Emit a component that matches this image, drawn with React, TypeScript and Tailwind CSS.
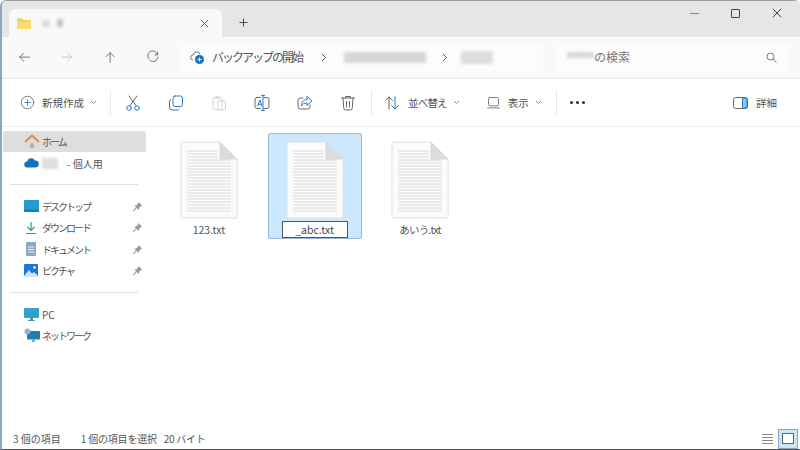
import { ReactNode } from "react";

const font = { fontFamily: '"Noto Sans CJK JP", "Noto Sans", sans-serif' };

function Blur({ className }: { className: string }) {
  return <div className={`blur-[1.5px] ${className}`} />;
}

function Chevron() {
  return (
    <svg width="7" height="5" viewBox="0 0 7 5" fill="none" stroke="#8a8a8a" strokeWidth="1">
      <path d="M1 1l2.5 2.5L6 1" />
    </svg>
  );
}

function Ico({ size = 18, children }: { size?: number; children: ReactNode }) {
  return (
    <svg width={size} height={size} viewBox="0 0 18 18" fill="none" strokeLinecap="round" strokeLinejoin="round" className="shrink-0">
      {children}
    </svg>
  );
}

function TxtFile() {
  const lines = Array.from({ length: 21 }, (_, i) => 10 + i * 3);
  return (
    <svg width="58" height="78" viewBox="0 0 58 78" className="shrink-0">
      <path d="M1 1h39l17 17v59H1z" fill="#fbfbfb" stroke="#e0e0e0" />
      <path d="M40 1l17 17H40z" fill="#dcdcdc" stroke="#d8d8d8" />
      {lines.map((y) => (
        <path key={y} d={`M7 ${y}h${y < 18 ? 31 : 44}`} stroke="#dadada" strokeWidth="1" />
      ))}
    </svg>
  );
}

function Pin() {
  return (
    <svg width="11" height="11" viewBox="0 0 10 10" className="ml-auto">
      <path d="M5.8.8l3.4 3.4-1.3.5-1.6 2-.3 1.6L2 4.4l1.6-.3 2-1.6z" fill="#999" />
      <path d="M3.6 6.4L1 9" stroke="#999" />
    </svg>
  );
}

function NavRow({ icon, label, pin, active }: { icon: ReactNode; label: ReactNode; pin?: boolean; active?: boolean }) {
  return (
    <div className={`flex items-center h-[21.4px] pl-[21px] pr-[3px] rounded-[2px] text-[10px] text-[#555] ${active ? "bg-[#dedede]" : ""}`}>
      <div className="w-[18px] flex shrink-0">{icon}</div>
      {label}
      {pin && <Pin />}
    </div>
  );
}

function Kana({ children }: { children: string }) {
  return <span className="tracking-[-2px]">{children}</span>;
}

function Sep() {
  return <div className="h-px bg-[#e0e0e0] ml-[7px] mr-[8px] my-[10.5px]" />;
}

function FileItem({ name, selected, narrow }: { name: string; selected?: boolean; narrow?: boolean }) {
  return (
    <div className={`w-[94px] h-[106px] flex flex-col items-center pt-[7px] rounded-[2px] border ${selected ? "bg-[#cce8ff] border-[#99b8d6]" : "border-transparent"}`}>
      <TxtFile />
      {selected ? (
        <div className="mt-[2px] w-[66px] h-[18px] bg-white border border-[#555] text-[10.5px] text-[#444] flex items-center justify-center">{name}</div>
      ) : (
        <div className={`mt-[4px] text-[10.5px] text-[#555] leading-[14px] ${narrow ? "tracking-[-0.8px]" : ""}`}>{name}</div>
      )}
    </div>
  );
}

export default function App() {
  return (
    <div style={font} className="w-[800px] h-[450px] overflow-hidden bg-white flex flex-col border-l-2 border-l-[#8da6c4] border-t border-t-[#9c9c9c] border-b border-b-[#555] rounded-tl-[6px] rounded-tr-[6px]">
      {/* Title bar */}
      <div className="h-[36px] bg-[#e6e6e6] flex items-end shrink-0">
        <div className="ml-[7px] w-[213px] h-[28px] bg-[#f9f9f9] rounded-t-[6px] flex items-center pl-[8px] pr-[13px]">
          <svg width="14" height="11" viewBox="0 0 14 11">
            <path d="M0 1.5A1 1 0 011 .5h4l1.5 1.5H13a1 1 0 011 1V10a1 1 0 01-1 1H1a1 1 0 01-1-1z" fill="#f5cb4a" />
            <path d="M0 3.6h14V10a1 1 0 01-1 1H1a1 1 0 01-1-1z" fill="#fbdc70" />
          </svg>
          <Blur className="ml-[11px] w-[8px] h-[7px] bg-[#dcdcdc]" />
          <Blur className="ml-[7px] w-[6px] h-[8px] bg-[#c4c4c4]" />
          <svg width="9" height="9" viewBox="0 0 9 9" stroke="#555" strokeWidth="0.9" className="ml-auto">
            <path d="M.8.8l7.4 7.4M8.2.8L.8 8.2" />
          </svg>
        </div>
        <svg width="9" height="9" viewBox="0 0 9 9" stroke="#444" strokeWidth="1" className="ml-[17px] mb-[10px]">
          <path d="M4.5.5v8M.5 4.5h8" />
        </svg>
        <div className="ml-auto flex items-center gap-[32px] self-start mt-[6px] mr-[18px] h-[12px]">
          <div className="w-[9px] h-px bg-[#888]" />
          <div className="w-[9px] h-[9px] border border-[#444] rounded-[1px]" />
          <svg width="10" height="10" viewBox="0 0 10 10" stroke="#444" strokeWidth="1">
            <path d="M.8.8l8.4 8.4M9.2.8L.8 9.2" />
          </svg>
        </div>
      </div>

      {/* Address bar */}
      <div className="h-[42px] bg-[#f9f9f9] border-b border-[#e5e5e5] flex items-center shrink-0 pl-[15px] text-[#444]">
        <div className="flex items-center gap-[27px]">
          <Ico size={16}><path d="M14 8H3M7.5 3.5L3 8l4.5 4.5" stroke="#666" /></Ico>
          <Ico size={16}><path d="M2 8h11M8.5 3.5L13 8l-4.5 4.5" stroke="#c4c4c4" /></Ico>
          <Ico size={16}><path d="M8 14V3M3.5 7.5L8 3l4.500 4.500" stroke="#666" /></Ico>
          <Ico size={16}><path d="M12.8 5.2A5.5 5.5 0 103.2 10M13 2.5v3H10M13.4 8a5.5 5.5 0 01-9 3.8" stroke="#666" /></Ico>
        </div>
        <div className="ml-[18px] w-[363px] h-[28px] bg-[#fcfcfc] flex items-center pl-[10px] text-[12px]">
          <svg width="15" height="14" viewBox="0 0 15 14" className="shrink-0">
            <path d="M3 9a2.5 2.5 0 01.2-5A3.5 3.5 0 0110 3.2" fill="none" stroke="#3e7fb5" strokeWidth="1" />
            <circle cx="9.5" cy="8.5" r="4.5" fill="#1f6fb5" />
            <path d="M9.5 6.5v4M7.5 8.5h4" stroke="#fff" />
          </svg>
          <span className="ml-[7px] w-[90px] -mt-[2px] whitespace-nowrap tracking-[-2px] text-[#555]">バックアップの開始</span>
          <svg width="6" height="9" viewBox="0 0 6 9" stroke="#555" fill="none" className="ml-[19px]"><path d="M1 1l3.5 3.5L1 8" /></svg>
          <Blur className="ml-[17px] w-[82px] h-[11px] bg-[#d6d6d6]" />
          <svg width="6" height="9" viewBox="0 0 6 9" stroke="#555" fill="none" className="ml-[16px]"><path d="M1 1l3.5 3.5L1 8" /></svg>
          <Blur className="ml-[13px] w-[32px] h-[13px] bg-[#dedede]" />
        </div>
        <div className="ml-[14px] w-[233px] h-[28px] bg-[#fcfcfc] flex items-center pl-[10px] text-[12px] text-[#777]">
          <Blur className="w-[27px] h-[6px] -mt-[5px] bg-[#d8d8d8]" />
          <span className="-mt-[2px]">の検索</span>
          <svg width="11" height="11" viewBox="0 0 11 11" fill="none" stroke="#777" className="ml-auto mr-[13px]">
            <circle cx="4.5" cy="4.5" r="3.5" /><path d="M7 7l3.5 3.5" />
          </svg>
        </div>
      </div>

      {/* Toolbar */}
      <div className="h-[48px] bg-white border-b border-[#eeeeee] flex items-center shrink-0 text-[10.5px] text-[#555]">
        <div className="flex items-center pl-[18px] w-[108px]">
          <Ico size={15}><circle cx="9" cy="9" r="7.5" stroke="#666" /><path d="M9 5.5v7M5.5 9h7" stroke="#2b7cc4" /></Ico>
          <span className="ml-[7px] mt-[1px]">新規作成</span>
          <span className="ml-[6px]"><Chevron /></span>
        </div>
        <div className="w-px h-[26px] bg-[#e8e8e8]" />
        <div className="flex items-center gap-[25px] pl-[13px] w-[260px]">
          <Ico><path d="M5 2l7 9.5M13 2L6 11.5" stroke="#666" /><circle cx="5" cy="14" r="2.3" stroke="#2b7cc4" /><circle cx="13" cy="14" r="2.3" stroke="#2b7cc4" /></Ico>
          <Ico><rect x="6" y="2" width="9.5" height="10.5" rx="2" stroke="#2b7cc4" /><path d="M3.5 5.5A2 2 0 002.5 7.2V13a3 3 0 003 3h5a2 2 0 001.7-1" stroke="#666" /></Ico>
          <Ico><rect x="3" y="3.5" width="9" height="12" rx="1.5" stroke="#d4d4d4" /><rect x="8" y="7" width="7.5" height="9" rx="1" stroke="#c6d9ea" /><rect x="5.5" y="2" width="4" height="3" fill="#ddd" /></Ico>
          <Ico><rect x="2" y="3.5" width="14" height="11" rx="2" stroke="#666" /><path d="M9 1.5v15" stroke="#fff" strokeWidth="3" /><path d="M10 1.5v15M8.5 1.5h3M8.5 16.5h3" stroke="#2b7cc4" /><path d="M4.5 12L7 6l2 6M5.3 10.3h3" stroke="#2b7cc4" /></Ico>
          <Ico><path d="M7 4H4.5A2.5 2.5 0 002 6.5v6A2.5 2.5 0 004.5 15h7a2.5 2.5 0 002.5-2.5V11" stroke="#666" /><path d="M11 2.5L16 7l-5 4.5V9c-3 0-4.500 1-5.500 3 0-4 2-6.500 5.500-6.500z" stroke="#2b7cc4" /></Ico>
          <Ico><path d="M2.500 4h13M6.500 4V2.500h5V4M4 4l.8 10.500A2 2 0 006.800 16h4.400a2 2 0 002-1.500L14 4M7.500 7.500v5.500M10.500 7.500v5.500" stroke="#666" /></Ico>
        </div>
        <div className="w-px h-[26px] bg-[#e8e8e8]" />
        <div className="flex items-center ml-[11px]">
          <Ico><path d="M6 15V3M2.500 6.500L6 3l3.500 3.500" stroke="#666" /><path d="M12 3v12M8.500 11.500L12 15l3.500-3.500" stroke="#2b7cc4" /></Ico>
          <span className="ml-[7px] mt-[1px] tracking-[-0.8px]">並べ替え</span>
          <span className="ml-[6px]"><Chevron /></span>
        </div>
        <div className="flex items-center ml-[26px]">
          <Ico size={15}><rect x="3" y="3" width="12" height="10" rx="1.500" stroke="#666" /><path d="M2 15.500h14" stroke="#666" /></Ico>
          <span className="ml-[7px] mt-[1px]">表示</span>
          <span className="ml-[6px]"><Chevron /></span>
        </div>
        <div className="w-px h-[26px] bg-[#e8e8e8] ml-[14px]" />
        <div className="flex gap-[3px] ml-[13px]">
          <div className="w-[3px] h-[3px] rounded-full bg-[#333]" />
          <div className="w-[3px] h-[3px] rounded-full bg-[#333]" />
          <div className="w-[3px] h-[3px] rounded-full bg-[#333]" />
        </div>
        <div className="ml-auto flex items-center mr-[23px]">
          <svg width="15" height="12" viewBox="0 0 15 12" fill="none">
            <rect x=".5" y=".5" width="14" height="11" rx="2" stroke="#666" />
            <path d="M9.500 1h3.500a1 1 0 011 1v8a1 1 0 01-1 1H9.500z" fill="#8cc4ee" stroke="#2b7cc4" />
          </svg>
          <span className="ml-[8px] mt-[1px]">詳細</span>
        </div>
      </div>

      {/* Body */}
      <div className="flex flex-1 min-h-0">
        <div className="w-[160px] shrink-0 pl-[1px] pr-[16px] pt-[4px]">
          <NavRow active label={<Kana>ホーム</Kana>} icon={
            <svg width="16" height="15" viewBox="0 0 16 15">
              <path d="M3 7.500V14h10V7.500L8 3z" fill="#d9d9d9" />
              <path d="M1 8l7-6.500L15 8" fill="none" stroke="#e8873a" strokeWidth="1.800" />
              <rect x="6.500" y="9.500" width="3" height="4.500" fill="#a8a8a8" />
            </svg>
          } />
          <NavRow label={
            <span className="flex items-center"><Blur className="w-[16px] h-[11px] bg-[#dddddd]" /><span className="ml-[9px]">- 個人用</span></span>
          } icon={
            <svg width="15" height="10" viewBox="0 0 15 10"><path d="M3.500 9.500a3 3 0 01-.4-6 4.200 4.200 0 017.800-1A3.300 3.300 0 0111.500 9.500z" fill="#1470c4" /></svg>
          } />
          <Sep />
          <NavRow pin label={<Kana>デスクトップ</Kana>} icon={
            <svg width="15" height="12" viewBox="0 0 15 12"><rect width="15" height="12" rx="1" fill="#1f9ed1" /><rect y="9.500" width="15" height="2.500" fill="#1a7fb0" /></svg>
          } />
          <NavRow pin label={<Kana>ダウンロード</Kana>} icon={
            <svg width="14" height="14" viewBox="0 0 14 14" fill="none" stroke="#2da36b" strokeWidth="1.200"><path d="M7 1v8.500M3.500 6L7 9.500 10.500 6M2 12.500h10" /></svg>
          } />
          <NavRow pin label={<Kana>ドキュメント</Kana>} icon={
            <svg width="15" height="14" viewBox="0 0 15 14"><rect x="2" width="10" height="14" rx="1" fill="#90a8c4" /><path d="M4 5h6M4 7.500h6M4 10h6" stroke="#e6edf5" /></svg>
          } />
          <NavRow pin label={<Kana>ピクチャ</Kana>} icon={
            <svg width="14" height="13" viewBox="0 0 14 13"><rect width="14" height="13" rx="1" fill="#1c78d0" /><path d="M0 12l5-6 3 3.500 2-1.500 4 4v1H0z" fill="#cfe6fa" /><circle cx="10.500" cy="3.500" r="1.300" fill="#fff" /></svg>
          } />
          <Sep />
          <NavRow label="PC" icon={
            <svg width="15" height="13" viewBox="0 0 15 13"><rect width="15" height="10" rx="1" fill="#2fa3c9" /><rect x="6" y="10" width="3" height="2" fill="#5b8fa8" /><rect x="4" y="12" width="7" height="1" fill="#5b8fa8" /></svg>
          } />
          <NavRow label={<Kana>ネットワーク</Kana>} icon={
            <svg width="16" height="15" viewBox="0 0 16 15"><rect x="3" y="3" width="13" height="8.500" rx="1" fill="#1f7fae" /><circle cx="3.500" cy="3.500" r="3" fill="#86b8d8" /><rect x="8" y="11.500" width="3" height="2.500" fill="#7fa8c0" /></svg>
          } />
        </div>
        <div className="flex gap-[11.500px] pt-[5.500px] items-start">
          <FileItem name="123.txt" />
          <FileItem name="_abc.txt" selected />
          <FileItem name="あいう.txt" narrow />
        </div>
      </div>

      {/* Status bar */}
      <div className="h-[21px] shrink-0 flex items-center pl-[11px] text-[10px] text-[#555] bg-white">
        <span>3 個の項目</span>
        <span className="ml-[20px] tracking-[-0.2px]">1 個の項目を選択</span>
        <span className="ml-[7px] tracking-[-0.3px]">20 バイト</span>
        <div className="ml-auto flex items-center gap-[5px] mr-[2px]">
          <div className="flex flex-col gap-[2px] w-[11px]">
            <div className="h-px bg-[#888]" /><div className="h-px bg-[#888]" /><div className="h-px bg-[#888]" /><div className="h-px bg-[#888]" />
          </div>
          <div className="w-[20px] h-[20px] bg-[#cde6f7] border border-[#7fa8c8] flex items-center justify-center">
            <div className="w-[12px] h-[11px] border border-[#666] bg-white" />
          </div>
        </div>
      </div>
    </div>
  );
}
